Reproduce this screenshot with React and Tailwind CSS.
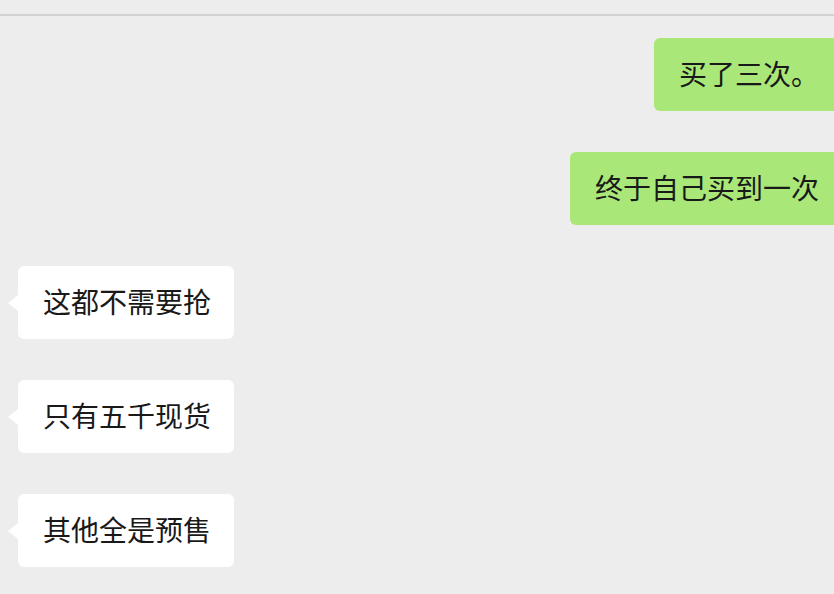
import React from "react";

const messages = [
  { id: 1, mine: true, text: "买了三次。" },
  { id: 2, mine: true, text: "终于自己买到一次" },
  { id: 3, mine: false, text: "这都不需要抢" },
  { id: 4, mine: false, text: "只有五千现货" },
  { id: 5, mine: false, text: "其他全是预售" },
];

const Bubble = ({ mine, text }) => {
  if (mine) {
    return (
      <div className="flex justify-end -mr-[10px]">
        <div className="h-[73px] flex items-center px-[25px] pb-[3px] rounded-[6px] bg-[#a9e878] text-[28px] leading-none text-[#191919]">
          {text}
        </div>
      </div>
    );
  }
  return (
    <div className="flex pl-[8px]">
      {/* little arrow on the left of incoming bubbles */}
      <div className="flex items-center">
        <div className="w-0 h-0 border-y-[8px] border-y-transparent border-r-[10px] border-r-white" />
      </div>
      <div className="h-[73px] flex items-center pl-[25px] pr-[23px] pb-[3px] rounded-[6px] bg-white text-[28px] leading-none text-[#191919]">
        {text}
      </div>
    </div>
  );
};

const App = () => {
  return (
    <div
      className="w-[834px] h-[594px] overflow-hidden bg-[#ededed] flex flex-col"
      style={{ fontFamily: '"Noto Sans CJK SC", "Liberation Sans", sans-serif' }}
    >
      {/* header edge */}
      <div className="h-[14px] bg-[#ededed]" />
      <div className="h-[2px] bg-[#d2d2d2]" />

      {/* chat list */}
      <div className="flex flex-col gap-[41px] pt-[22px]">
        {messages.map((m) => (
          <Bubble key={m.id} mine={m.mine} text={m.text} />
        ))}
      </div>
    </div>
  );
};

export default App;
